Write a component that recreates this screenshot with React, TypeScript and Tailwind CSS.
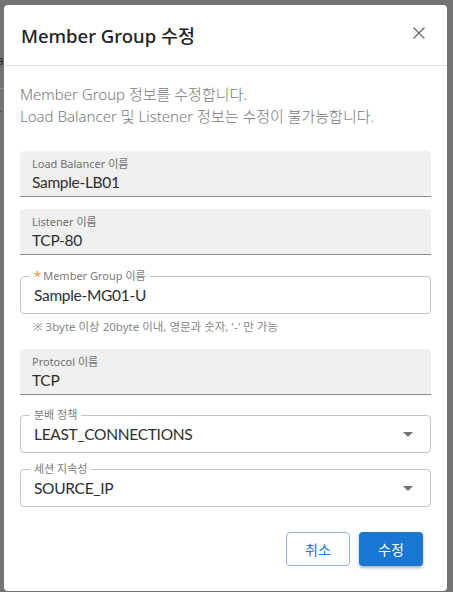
import { X } from 'lucide-react'

const font = { fontFamily: '"Noto Sans", "Noto Sans CJK KR", sans-serif' }
const valueFont = { fontFamily: 'Lato, "Noto Sans CJK KR", sans-serif' }

function FilledField({ label, value }: { label: string; value: string }) {
  return (
    <div className="h-[46px] rounded-t-[4px] bg-[#f0f0f0] border-b border-[#8c8c8c] px-[12px] pt-[5px]">
      <div className="text-[11px] leading-[15px] text-[#6f6f6f]">{label}</div>
      <div className="text-[15.5px] leading-[22px] tracking-[-0.3px] text-[#2e2e2e]" style={valueFont}>
        {value}
      </div>
    </div>
  )
}

function OutlinedField({
  label,
  value,
  required,
  select,
}: {
  label: string
  value: string
  required?: boolean
  select?: boolean
}) {
  return (
    <div className="relative h-[38px] rounded-[4px] border border-[#c4c4c4] flex items-center px-[13px]">
      <div className="absolute left-[9px] -top-[8px] bg-white px-[4px] text-[11px] leading-[14px] text-[#7a7a7a] flex items-center">
        {required && <span className="text-[#f28c28] mr-[2px] text-[13px] leading-[14px]">*</span>}
        {label}
      </div>
      <div className="flex-1 text-[15.5px] leading-[22px] tracking-[-0.3px] text-[#2e2e2e]" style={valueFont}>
        {value}
      </div>
      {select && (
        <svg width="10" height="5" viewBox="0 0 10 5" className="mr-[4px]">
          <path d="M0 0 L10 0 L5 5 Z" fill="#757575" />
        </svg>
      )}
    </div>
  )
}

export default function App() {
  return (
    <div className="relative w-[453px] h-[592px] bg-[#737373] overflow-hidden" style={font}>
      {/* 뒤 페이지 흔적 */}
      <div className="absolute left-0 top-[88px] w-[4px] h-px bg-[#8a8a8a]" />
      <div className="absolute left-0 top-[52px] text-[12px] text-[#2e2e2e] -ml-[3px]">a</div>
      <div className="absolute left-0 top-[105px] text-[12px] text-[#2e2e2e] -ml-[4px]">r</div>

      <div className="absolute left-[4px] top-[5px] w-[443px] h-[586px] bg-white rounded-[4px] flex flex-col">
        {/* 헤더 */}
        <div className="h-[61px] flex items-center justify-between pl-[17px] pr-[18px] border-b border-[#e0e0e0]">
          <h2 className="text-[18.5px] leading-[28px] font-medium text-[#222] pt-[2px]">
            Member Group 수정
          </h2>
          <X className="w-[20px] h-[20px] text-[#6e6e6e] -mt-[4px]" strokeWidth={1.6} />
        </div>

        {/* 본문 */}
        <div className="px-[16px] pt-[17px]">
          <p className="text-[15px] leading-[22px] font-light text-[#777]">
            Member Group 정보를 수정합니다.
            <br />
            Load Balancer 및 Listener 정보는 수정이 불가능합니다.
          </p>

          <div className="mt-[24px]">
            <FilledField label="Load Balancer 이름" value="Sample-LB01" />
          </div>
          <div className="mt-[12px]">
            <FilledField label="Listener 이름" value="TCP-80" />
          </div>
          <div className="mt-[21px]">
            <OutlinedField label="Member Group 이름" value="Sample-MG01-U" required />
          </div>
          <div className="mt-[5px] pl-[13px] text-[11.5px] leading-[16px] text-[#888]">
            ※ 3byte 이상 20byte 이내, 영문과 숫자, '-' 만 가능
          </div>
          <div className="mt-[14px]">
            <FilledField label="Protocol 이름" value="TCP" />
          </div>
          <div className="mt-[20px]">
            <OutlinedField label="분배 정책" value="LEAST_CONNECTIONS" select />
          </div>
          <div className="mt-[16px]">
            <OutlinedField label="세션 지속성" value="SOURCE_IP" select />
          </div>

          {/* 버튼 */}
          <div className="mt-[25px] flex justify-end gap-[9px] pr-[8px]">
            <button className="w-[64px] h-[34px] rounded-[4px] border border-[#8fb8e6] text-[14px] text-[#1976d2] bg-white">
              취소
            </button>
            <button className="w-[64px] h-[34px] rounded-[4px] bg-[#1976d2] text-[14px] text-white shadow-[0_2px_3px_rgba(0,0,0,0.3)]">
              수정
            </button>
          </div>
        </div>
      </div>
    </div>
  )
}
